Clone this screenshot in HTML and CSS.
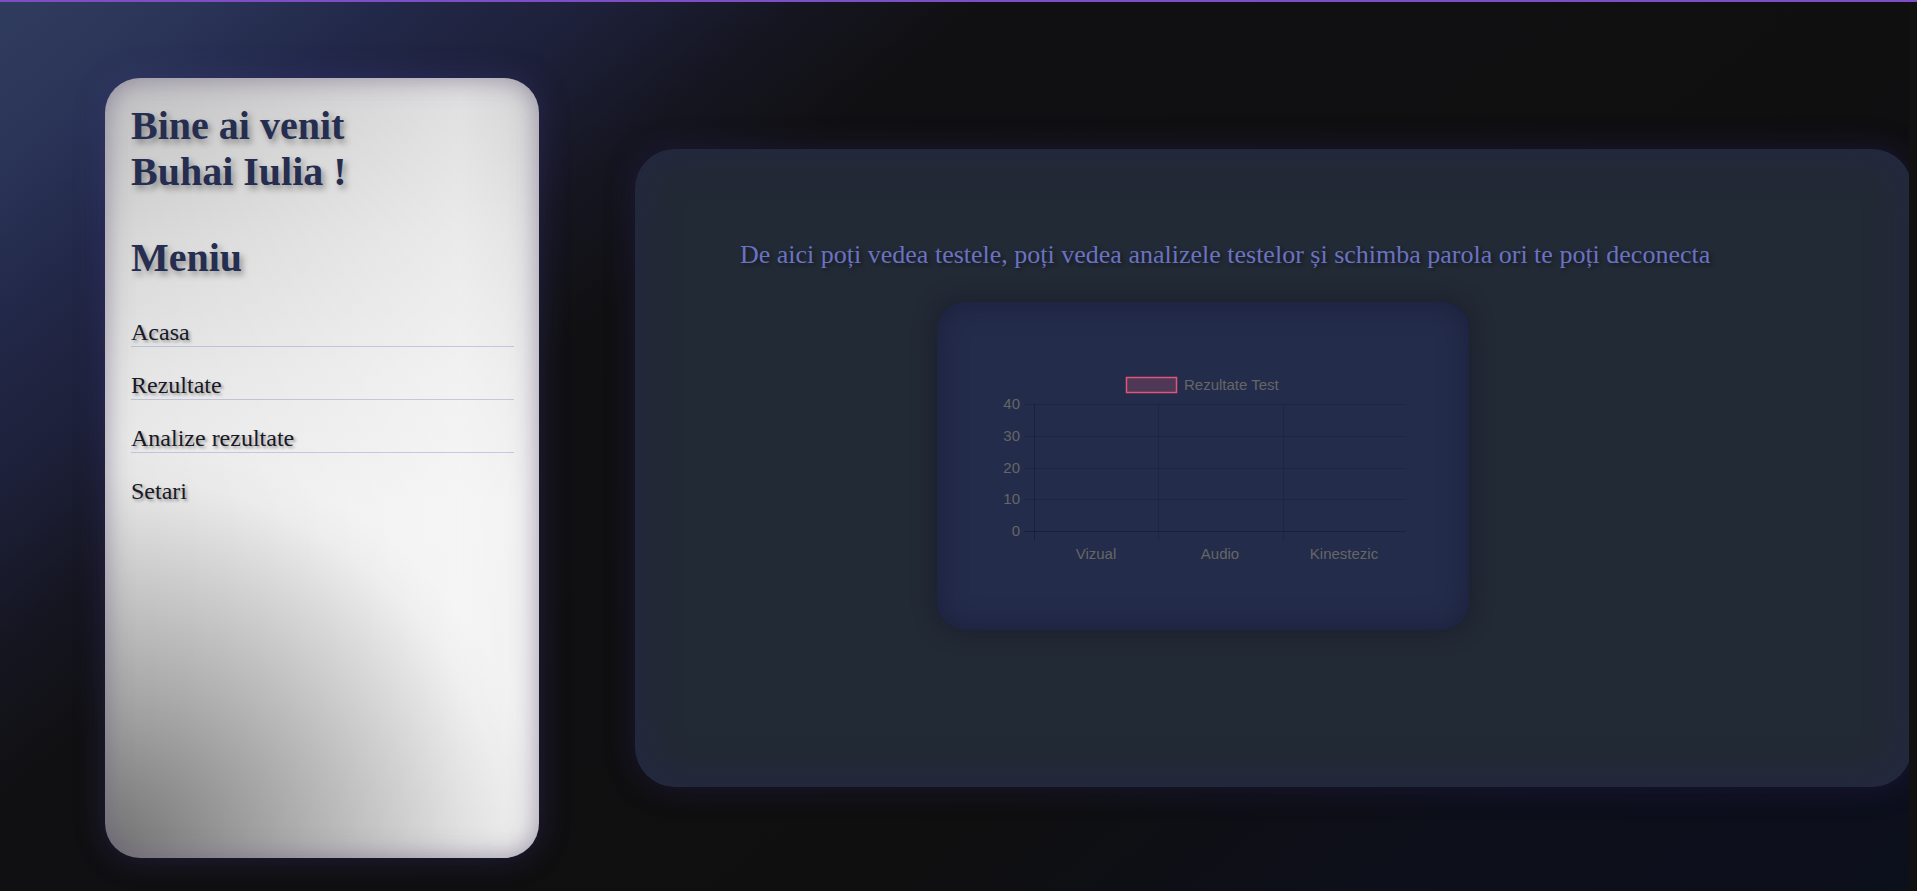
FILE: index.html
```html
<!DOCTYPE html>
<html lang="ro">
<head>
<meta charset="utf-8">
<title>Meniu</title>
<link rel="stylesheet" href="styles.css">
</head>
<body>
<div class="topbar"></div>
<div class="page">
  <aside class="sidebar">
    <h1 class="welcome">Bine ai venit<br>Buhai Iulia !</h1>
    <h2 class="menu-title">Meniu</h2>
    <nav class="menu">
      <a class="menu-item">Acasa</a>
      <a class="menu-item">Rezultate</a>
      <a class="menu-item">Analize rezultate</a>
      <a class="menu-item last">Setari</a>
    </nav>
  </aside>
  <main class="panel">
    <p class="intro">De aici poți vedea testele, poți vedea analizele testelor și schimba parola ori te poți deconecta</p>
    <div class="chart-card">
      <svg class="chart" width="532" height="328" viewBox="0 0 532 328">
        <rect x="189.5" y="75.5" width="50" height="15" fill="rgba(255,99,132,0.2)" stroke="#e0557a" stroke-width="1.5"/>
        <text class="chart-text" x="247" y="88">Rezultate Test</text>
        <g stroke="rgba(0,0,0,0.13)" stroke-width="1">
          <line x1="87" y1="102.5" x2="469" y2="102.5"/>
          <line x1="87" y1="134.5" x2="469" y2="134.5"/>
          <line x1="87" y1="166.5" x2="469" y2="166.5"/>
          <line x1="87" y1="197.5" x2="469" y2="197.5"/>
          <line x1="221.5" y1="102" x2="221.5" y2="239"/>
          <line x1="346.5" y1="102" x2="346.5" y2="239"/>
        </g>
        <g stroke="rgba(0,0,0,0.25)" stroke-width="1">
          <line x1="87" y1="229.5" x2="469" y2="229.5"/>
          <line x1="97.5" y1="102" x2="97.5" y2="239"/>
        </g>
        <g class="chart-text" text-anchor="end">
          <text x="83" y="107">40</text>
          <text x="83" y="139">30</text>
          <text x="83" y="171">20</text>
          <text x="83" y="202">10</text>
          <text x="83" y="234">0</text>
        </g>
        <g class="chart-text" text-anchor="middle">
          <text x="159" y="257">Vizual</text>
          <text x="283" y="257">Audio</text>
          <text x="407" y="257">Kinestezic</text>
        </g>
      </svg>
    </div>
  </main>
</div>
</body>
</html>
```
FILE: styles.css
```css
html, body {
  margin: 0;
  padding: 0;
  background: #111112;
  height: 891px;
  overflow: hidden;
}

.topbar {
  height: 2px;
  background: #7e4fc4;
}

.page {
  width: 1909px;
  height: 889px;
  overflow: hidden;
  display: flex;
  align-items: flex-start;
  gap: 96px;
  padding: 76px 0 0 105px;
  box-sizing: border-box;
  background: linear-gradient(141deg,
    #303c5e 0%,
    #2a3457 7%,
    #222849 13%,
    #1d2039 20%,
    #151520 27%,
    #101012 33%,
    #0f0f10 66%,
    #0e0f15 74%,
    #0d0f1a 82%,
    #0c0f1c 100%);
}

.sidebar {
  flex: 0 0 auto;
  width: 434px;
  height: 780px;
  box-sizing: border-box;
  padding: 25px 25px 0 26px;
  border-radius: 35px;
  background:
    radial-gradient(ellipse 440px 420px at 0 100%, rgba(0,0,0,0.5) 0%, rgba(0,0,0,0.32) 33%, rgba(0,0,0,0.17) 62%, rgba(0,0,0,0.02) 91%, rgba(0,0,0,0) 100%),
    linear-gradient(to right, rgba(255,255,255,0) 0%, rgba(255,255,255,0.5) 82%, rgba(255,255,255,0.3) 100%),
    linear-gradient(to bottom, #bebec0 0%, #d6d6d6 20%, #e4e4e4 38%, #ececec 55%, #eaeaea 80%, #e2e2e2 100%);
  box-shadow: inset 0 0 24px 2px rgba(105,95,125,0.55), 0 0 30px rgba(70,60,140,0.35);
  font-family: "Liberation Serif", "Times New Roman", serif;
}

.welcome,
.menu-title {
  margin: 0;
  font-size: 40px;
  line-height: 46px;
  font-weight: bold;
  color: #252d50;
  text-shadow: 3px 4px 6px rgba(0,0,0,0.35);
}

.menu-title {
  margin-top: 40px;
}

.menu {
  display: flex;
  flex-direction: column;
  gap: 24px;
  margin-top: 37px;
}

.menu-item {
  display: block;
  font-size: 24px;
  line-height: 28px;
  color: #181826;
  text-shadow: 2px 2px 3px rgba(0,0,0,0.35);
  border-bottom: 1px solid rgba(140,150,200,0.45);
}

.menu-item.last {
  border-bottom: none;
}

.panel {
  flex: 0 0 auto;
  width: 1277px;
  height: 638px;
  margin-top: 71px;
  box-sizing: border-box;
  padding: 91px 0 0 105px;
  border-radius: 40px;
  background: #222a35;
  box-shadow: inset 0 0 45px rgba(40,35,90,0.4), 0 0 30px rgba(50,40,110,0.35);
}

.intro {
  margin: 0;
  font-family: "Liberation Serif", "Times New Roman", serif;
  font-size: 26px;
  line-height: 30px;
  color: #6a72c2;
  text-shadow: 2px 2px 4px rgba(0,0,0,0.45);
  white-space: nowrap;
}

.chart-card {
  width: 532px;
  height: 328px;
  margin: 32px 0 0 197px;
  border-radius: 28px;
  background: #242c4b;
  box-shadow: inset 0 0 28px rgba(18,22,45,0.55), 0 0 22px rgba(20,22,38,0.6);
}

.chart {
  display: block;
}

.chart-text {
  font-family: "Liberation Sans", Arial, sans-serif;
  font-size: 15px;
  fill: #666;
}
```
